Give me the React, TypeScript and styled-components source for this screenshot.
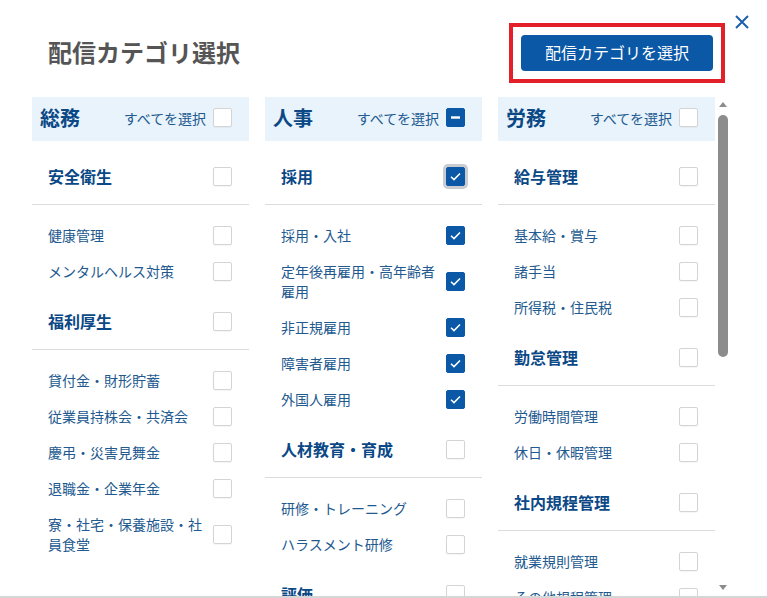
import * as React from "react";
import styled, { createGlobalStyle } from "styled-components";

const colors = {
  navy: "#0b4886",
  text: "#22598f",
  blue: "#0a58a6",
  headerBg: "#e8f3fc",
  line: "#dcdcdc",
  title: "#555555",
  red: "#e3202a",
  scroll: "#8c8c8c",
};

const GlobalStyle = createGlobalStyle`
  html, body {
    margin: 0;
    padding: 0;
    background: #ffffff;
  }
  body {
    font-family: "Noto Sans CJK JP", "Noto Sans", sans-serif;
  }
`;

type CheckState = "off" | "on" | "mixed";

interface Item {
  label: string;
  checked?: boolean;
}

interface Group {
  name: string;
  state: CheckState;
  focused?: boolean;
  items: Item[];
}

interface Column {
  title: string;
  all: CheckState;
  groups: Group[];
}

const columns: Column[] = [
  {
    title: "総務",
    all: "off",
    groups: [
      {
        name: "安全衛生",
        state: "off",
        items: [{ label: "健康管理" }, { label: "メンタルヘルス対策" }],
      },
      {
        name: "福利厚生",
        state: "off",
        items: [
          { label: "貸付金・財形貯蓄" },
          { label: "従業員持株会・共済会" },
          { label: "慶弔・災害見舞金" },
          { label: "退職金・企業年金" },
          { label: "寮・社宅・保養施設・社員食堂" },
        ],
      },
    ],
  },
  {
    title: "人事",
    all: "mixed",
    groups: [
      {
        name: "採用",
        state: "on",
        focused: true,
        items: [
          { label: "採用・入社", checked: true },
          { label: "定年後再雇用・高年齢者雇用", checked: true },
          { label: "非正規雇用", checked: true },
          { label: "障害者雇用", checked: true },
          { label: "外国人雇用", checked: true },
        ],
      },
      {
        name: "人材教育・育成",
        state: "off",
        items: [{ label: "研修・トレーニング" }, { label: "ハラスメント研修" }],
      },
      {
        name: "評価",
        state: "off",
        items: [{ label: "人事評価" }],
      },
    ],
  },
  {
    title: "労務",
    all: "off",
    groups: [
      {
        name: "給与管理",
        state: "off",
        items: [{ label: "基本給・賞与" }, { label: "諸手当" }, { label: "所得税・住民税" }],
      },
      {
        name: "勤怠管理",
        state: "off",
        items: [{ label: "労働時間管理" }, { label: "休日・休暇管理" }],
      },
      {
        name: "社内規程管理",
        state: "off",
        items: [{ label: "就業規則管理" }, { label: "その他規程管理" }],
      },
    ],
  },
];

const Modal = styled.div`
  position: relative;
  width: 767px;
  height: 598px;
  display: flex;
  flex-direction: column;
  overflow: hidden;
  border-bottom: 2px solid #d6d6d6;
  box-sizing: border-box;
`;

const TopBar = styled.div`
  height: 97px;
  box-sizing: border-box;
  padding: 23px 42px 0 48px;
  display: flex;
  align-items: flex-start;
  justify-content: space-between;
`;

const Title = styled.h1`
  margin: 0;
  height: 60px;
  box-sizing: border-box;
  padding-bottom: 3px;
  display: flex;
  align-items: center;
  font-size: 24px;
  font-weight: 700;
  color: ${colors.title};
`;

const Highlight = styled.div`
  border: 4px solid ${colors.red};
  padding: 8px 8px;
`;

const PrimaryButton = styled.button`
  display: block;
  width: 192px;
  height: 36px;
  padding: 0 0 2px;
  border: none;
  border-radius: 4px;
  background: ${colors.blue};
  color: #ffffff;
  font-family: inherit;
  font-size: 16px;
  cursor: pointer;
`;

const CloseButton = styled.button`
  position: absolute;
  top: 14px;
  right: 17px;
  width: 16px;
  height: 16px;
  padding: 0;
  border: none;
  background: none;
  cursor: pointer;
`;

const Body = styled.div`
  flex: 1;
  min-height: 0;
  display: flex;
  padding-left: 32px;
`;

const Columns = styled.div`
  display: grid;
  grid-template-columns: repeat(3, 217px);
  column-gap: 16px;
  align-items: start;
  overflow: hidden;
`;

const ColumnBox = styled.section`
  background: #ffffff;
`;

const ColumnHeader = styled.div`
  height: 44px;
  box-sizing: border-box;
  padding: 0 17px 3px 8px;
  display: flex;
  align-items: center;
  background: ${colors.headerBg};
`;

const ColumnTitle = styled.h2`
  margin: 0;
  flex: 1;
  font-size: 20px;
  font-weight: 700;
  color: ${colors.navy};
`;

const SelectAll = styled.label`
  display: flex;
  align-items: center;
  gap: 7px;
  font-size: 14px;
  color: ${colors.text};
`;

const ColumnBody = styled.div`
  padding-top: 17px;
`;

const CategoryRow = styled.div`
  height: 36px;
  padding: 0 17px 0 16px;
  display: flex;
  align-items: center;
  gap: 8px;
`;

const CategoryName = styled.span`
  flex: 1;
  font-size: 16px;
  font-weight: 700;
  color: ${colors.navy};
`;

const ItemList = styled.ul`
  list-style: none;
  margin: 10px 0 0;
  padding: 12px 17px 14px 16px;
  border-top: 1px solid ${colors.line};
`;

const ItemRow = styled.li`
  display: flex;
  align-items: center;
  gap: 8px;
  padding: 8px 0;
`;

const ItemLabel = styled.span`
  flex: 1;
  min-width: 0;
  font-size: 14px;
  line-height: 20px;
  color: ${colors.text};
`;

const Box = styled.span<{ $state: CheckState; $focused?: boolean }>`
  flex: none;
  width: 19px;
  height: 19px;
  box-sizing: border-box;
  border-radius: 2px;
  display: flex;
  align-items: center;
  justify-content: center;
  background: ${(p) => (p.$state === "off" ? "#ffffff" : colors.blue)};
  border: 1px solid ${(p) => (p.$state === "off" ? "#d4d4d4" : colors.blue)};
  box-shadow: ${(p) =>
    p.$focused ? "0 0 0 3px #c9cdd2" : p.$state === "off" ? "0 1px 1px rgba(0,0,0,0.04)" : "none"};
`;

const Scrollbar = styled.div`
  width: 16px;
  flex: none;
  display: flex;
  flex-direction: column;
  align-items: center;
`;

const Arrow = styled.span<{ $down?: boolean }>`
  flex: none;
  width: 0;
  height: 0;
  margin: ${(p) => (p.$down ? "auto 0 6px" : "5px 0 0")};
  border-left: 4px solid transparent;
  border-right: 4px solid transparent;
  ${(p) =>
    p.$down ? `border-top: 5px solid ${colors.scroll};` : `border-bottom: 5px solid ${colors.scroll};`}
`;

const Thumb = styled.span`
  flex: none;
  width: 10px;
  height: 242px;
  margin-top: 8px;
  border-radius: 5px;
  background: ${colors.scroll};
`;

const Checkbox: React.FC<{ state: CheckState; focused?: boolean }> = ({ state, focused }) => (
  <Box $state={state} $focused={focused}>
    {state === "on" && (
      <svg width="13" height="13" viewBox="0 0 13 13">
        <polyline points="2,6.8 5,9.6 11,3.4" fill="none" stroke="#fff" strokeWidth="1.5" />
      </svg>
    )}
    {state === "mixed" && (
      <svg width="13" height="13" viewBox="0 0 13 13">
        <rect x="2" y="5.3" width="9" height="2.4" fill="#fff" />
      </svg>
    )}
  </Box>
);

const CategoryColumn: React.FC<{ column: Column }> = ({ column }) => (
  <ColumnBox>
    <ColumnHeader>
      <ColumnTitle>{column.title}</ColumnTitle>
      <SelectAll>
        すべてを選択
        <Checkbox state={column.all} />
      </SelectAll>
    </ColumnHeader>
    <ColumnBody>
      {column.groups.map((g) => (
        <div key={g.name}>
          <CategoryRow>
            <CategoryName>{g.name}</CategoryName>
            <Checkbox state={g.state} focused={g.focused} />
          </CategoryRow>
          <ItemList>
            {g.items.map((it) => (
              <ItemRow key={it.label}>
                <ItemLabel>{it.label}</ItemLabel>
                <Checkbox state={it.checked ? "on" : "off"} />
              </ItemRow>
            ))}
          </ItemList>
        </div>
      ))}
    </ColumnBody>
  </ColumnBox>
);

export default function App() {
  return (
    <>
      <GlobalStyle />
      <Modal>
        <TopBar>
          <Title>配信カテゴリ選択</Title>
          <Highlight>
            <PrimaryButton>配信カテゴリを選択</PrimaryButton>
          </Highlight>
        </TopBar>
        <CloseButton aria-label="閉じる">
          <svg width="16" height="16" viewBox="0 0 16 16">
            <path d="M2 2 L14 14 M14 2 L2 14" stroke="#1b5fae" strokeWidth="2" fill="none" />
          </svg>
        </CloseButton>
        <Body>
          <Columns>
            {columns.map((c) => (
              <CategoryColumn key={c.title} column={c} />
            ))}
          </Columns>
          <Scrollbar>
            <Arrow />
            <Thumb />
            <Arrow $down />
          </Scrollbar>
        </Body>
      </Modal>
    </>
  );
}
